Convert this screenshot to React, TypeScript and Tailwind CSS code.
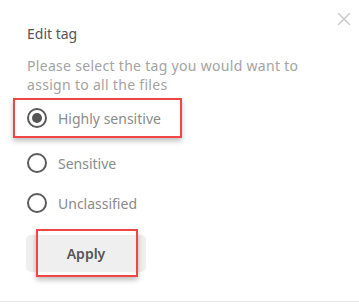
import { X } from 'lucide-react';

const options = ['Highly sensitive', 'Sensitive', 'Unclassified'];

function Radio({ checked }: { checked: boolean }) {
    return (
        <span className="flex h-5 w-5 shrink-0 items-center justify-center rounded-full border-2 border-[#5a5a5a]">
            {checked && <span className="h-[10px] w-[10px] rounded-full bg-[#555555]" />}
        </span>
    );
}

export default function App() {
    const selected = 'Highly sensitive';

    return (
        <div className="relative h-[304px] w-[359px] bg-white font-['Noto_Sans',sans-serif]">
            <div className="relative h-[302px] border-b border-[#e6e6e6] pl-[27px] pt-[24px]">
                <button className="absolute right-[4px] top-[8px] text-[#c8c8c8]">
                    <X size={22} strokeWidth={1.5} />
                </button>

                <h2 className="text-[14px] leading-[20px] text-[#555555]">Edit tag</h2>
                <p className="mt-[12px] w-[300px] text-[14px] leading-[19px] tracking-[0.3px] text-[#a3a3a3]">
                    Please select the tag you would want to assign to all the files
                </p>

                <div className="mt-[4px] flex flex-col">
                    {options.map((opt) => {
                        const checked = opt === selected;
                        return (
                            <label
                                key={opt}
                                className={
                                    checked
                                        ? 'ml-[-14px] mb-[5px] flex h-[40px] w-[169px] items-center gap-[11px] border-2 border-[#f04646] pl-[12px] shadow-[0_3px_5px_rgba(0,0,0,0.25)]'
                                        : 'flex h-[40px] items-center gap-[11px]'
                                }
                            >
                                <Radio checked={checked} />
                                <span className="text-[14px] text-[#8a8a8a]">{opt}</span>
                            </label>
                        );
                    })}
                </div>

                <div className="relative mt-[12px] w-[120px]">
                    <button className="-ml-px h-[37px] w-[120px] rounded-[5px] bg-[#efefef] text-[14px] font-semibold text-[#555555]">
                        Apply
                    </button>
                    <span className="pointer-events-none absolute left-[9px] top-[-6px] h-[48px] w-[102px] border-2 border-[#f04646] shadow-[0_3px_5px_rgba(0,0,0,0.25)]" />
                </div>
            </div>
        </div>
    );
}
